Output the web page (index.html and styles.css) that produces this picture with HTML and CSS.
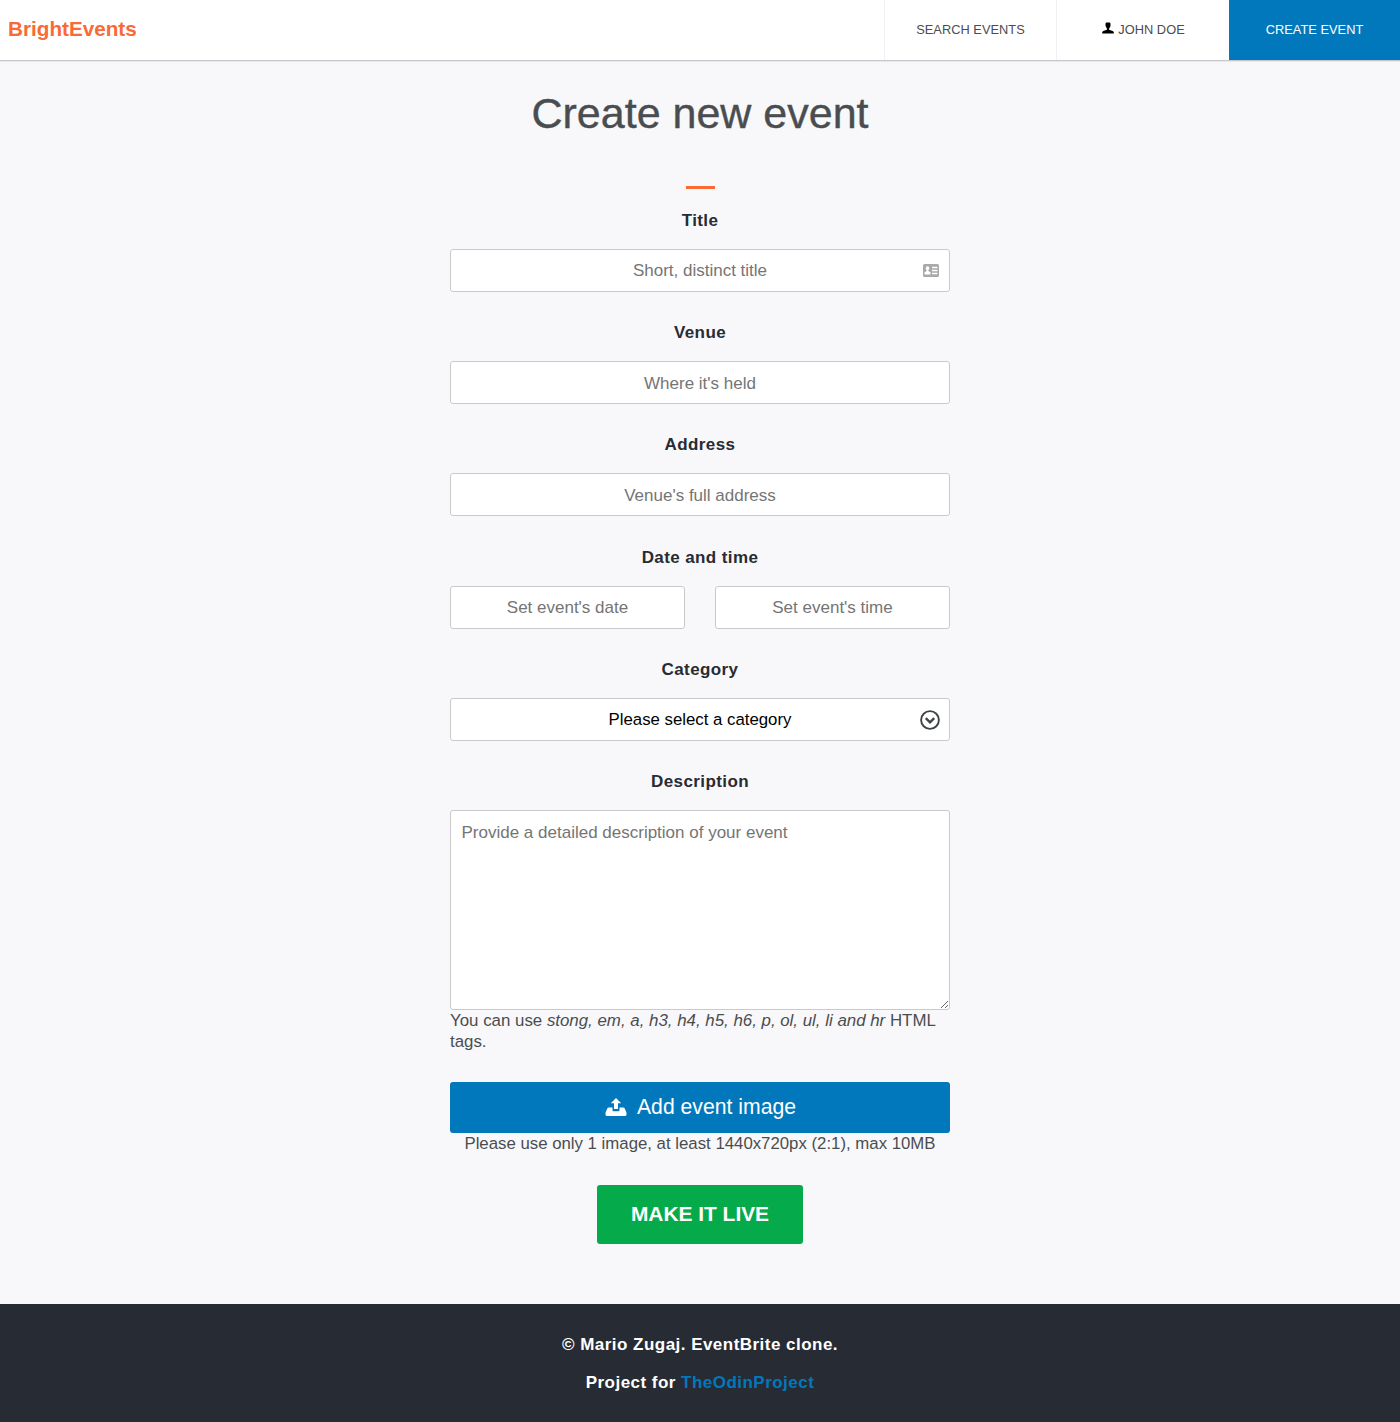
FILE: index.html
```html
<!DOCTYPE html>
<html lang="en">
<head>
  <meta charset="UTF-8">
  <meta name="viewport" content="width=device-width, initial-scale=1.0">
  <title>Create new event</title>
  <link rel="stylesheet" href="styles.css">
</head>
<body>
  <header class="topbar">
    <a class="logo" href="#">BrightEvents</a>
    <nav class="menu">
      <a class="menu-item search" href="#">SEARCH EVENTS</a>
      <a class="menu-item user" href="#">
        <svg class="user-icon" viewBox="0 0 12 12" width="12" height="12"><path d="M4.2 0.4h3.6l0.7 1.2v2.3l-0.6 1.6-0.8 1.1v1.1l3.6 1.4 1.1 0.9v1.4H0.2v-1.4l1.1-0.9 3.6-1.4V6.3L4.1 5.2 3.5 3.6V1.6z"/></svg>
        JOHN DOE
      </a>
      <a class="menu-item create" href="#">CREATE EVENT</a>
    </nav>
  </header>

  <main class="page">
    <h1>Create new event</h1>
    <div class="accent"></div>

    <form class="event-form">
      <label for="title">Title</label>
      <div class="field">
        <input type="text" id="title" placeholder="Short, distinct title">
        <svg class="card-icon" viewBox="0 0 16 13" width="16" height="13">
          <path fill-rule="evenodd" d="M1.5 0h13A1.5 1.5 0 0 1 16 1.5v10a1.5 1.5 0 0 1-1.500 1.500h-13A1.500 1.500 0 0 1 0 11.500v-10A1.500 1.500 0 0 1 1.500 0zM4.500 2.200a1.800 1.800 0 0 0-1.800 1.900c0 .9.300 1.700 1 2.200v.8l-2.200 1.100v2.300h6v-2.300l-2.200-1.100v-.8c.7-.5 1-1.300 1-2.200a1.800 1.800 0 0 0-1.800-1.900zM9 2.800v1.400h5.500V2.800zM9 5.800v1.400h5.500V5.800zM9 8.800v1.400h5.500V8.800z"/>
        </svg>
      </div>

      <label for="venue">Venue</label>
      <input type="text" id="venue" placeholder="Where it's held">

      <label for="address">Address</label>
      <input type="text" id="address" placeholder="Venue's full address">

      <label for="date">Date and time</label>
      <div class="date-row">
        <input type="text" id="date" placeholder="Set event's date">
        <input type="text" id="time" placeholder="Set event's time">
      </div>

      <label for="category">Category</label>
      <div class="field">
        <select id="category">
          <option>Please select a category</option>
        </select>
        <svg class="select-icon" viewBox="0 0 20 20" width="20" height="20">
          <circle cx="10" cy="10" r="8.900" fill="none" stroke="#3f4448" stroke-width="1.900"/>
          <path d="M5.800 8.200L10 12.400l4.200-4.200" fill="none" stroke="#3f4448" stroke-width="2.400"/>
        </svg>
      </div>

      <label for="description">Description</label>
      <textarea id="description" placeholder="Provide a detailed description of your event"></textarea>
      <p class="help">You can use <em>stong, em, a, h3, h4, h5, h6, p, ol, ul, li and hr</em> HTML tags.</p>

      <button type="button" class="upload">
        <svg viewBox="0 0 22 18" width="22" height="18">
          <path fill="#fff" d="M11 0l5.200 5.200h-3.200v5.800H9V5.200H5.800z"/>
          <path fill="#fff" d="M4 9.500h3.500v2.800c0 .6.400 1 1 1h5c.6 0 1-.4 1-1V9.500H18c1 0 1.500.6 1.800 1.200l1.700 3.800v2c0 .8-.7 1.500-1.500 1.500H2c-.8 0-1.500-.7-1.500-1.500v-2l1.700-3.800C2.500 10.100 3 9.500 4 9.500z"/>
        </svg>
        <span class="upload-text">Add event image</span>
      </button>
      <p class="help center">Please use only 1 image, at least 1440x720px (2:1), max 10MB</p>

      <button type="submit" class="live">MAKE IT LIVE</button>
    </form>
  </main>

  <footer class="footer">
    <p>© Mario Zugaj. EventBrite clone.</p>
    <p>Project for <a href="#">TheOdinProject</a></p>
  </footer>
</body>
</html>
```

FILE: styles.css
```css
* {
  box-sizing: border-box;
}

body {
  font-family: "Liberation Sans", Arial, sans-serif;
  margin: 0;
  background-color: #f8f8fa;
  color: #4a4d50;
  font-size: 17px;
}

a {
  text-decoration: none;
}

.topbar {
  display: flex;
  justify-content: space-between;
  align-items: stretch;
  height: 61px;
  background-color: white;
  border-bottom: 1px solid #c9c6cb;
  box-shadow: 0 1px 1px rgba(0, 0, 0, 0.06);
}

.logo {
  align-self: center;
  margin-left: 8px;
  margin-bottom: 2px;
  color: #f96a35;
  font-size: 20.700px;
  font-weight: bold;
}

.menu {
  display: flex;
}

.menu-item {
  display: flex;
  justify-content: center;
  align-items: center;
  gap: 4px;
  height: 60px;
  padding-bottom: 2px;
  color: #4a4d50;
  font-size: 12.800px;
  letter-spacing: 0.040px;
  border-left: 1px solid #eef0f3;
}

.search {
  width: 172px;
}

.user {
  width: 173px;
}

.user-icon {
  margin-bottom: 2px;
  margin-left: 1px;
}

.create {
  width: 171px;
  background-color: #0278bc;
  color: white;
  border-left: none;
}

.page {
  padding-bottom: 60px;
}

h1 {
  margin: 0;
  padding-top: 26px;
  height: 125px;
  text-align: center;
  font-size: 43px;
  font-weight: normal;
  line-height: 52px;
  -webkit-text-stroke: 0.400px #4a4d50;
}

.accent {
  width: 29px;
  height: 3px;
  margin: 0 auto;
  background-color: #f96a35;
}

.event-form {
  display: flex;
  flex-direction: column;
  width: 500px;
  margin: 0 auto;
}

label {
  margin-top: 1px;
  margin-bottom: 18px;
  height: 20px;
  line-height: 20px;
  text-align: center;
  font-weight: bold;
  color: #272b34;
  letter-spacing: 0.400px;
}

input, select, textarea {
  width: 100%;
  height: 43px;
  background-color: white;
  border: 1px solid #c9cacc;
  border-radius: 3px;
  font-family: inherit;
  font-size: 17px;
  color: black;
}

input {
  text-align: center;
  padding: 0 10px;
}

input::placeholder, textarea::placeholder {
  color: #757575;
  opacity: 1;
}

select {
  appearance: none;
  text-align: center;
  text-align-last: center;
  font-size: 16.800px;
}

textarea {
  display: block;
  height: 200px;
  padding: 11px 11px 11px 10.500px;
  line-height: 21px;
}

.event-form > input,
.event-form > .field,
.date-row {
  margin-bottom: 30.200px;
}

.event-form > input,
.date-row input {
  padding-top: 2px;
}

.event-form > label:first-child {
  margin-top: 22px;
  margin-bottom: 18px;
}

.field {
  position: relative;
}

.card-icon {
  position: absolute;
  top: 15px;
  right: 11px;
  fill: #a9a9a9;
}

.select-icon {
  position: absolute;
  top: 12px;
  right: 10px;
  pointer-events: none;
}

.date-row {
  display: flex;
  gap: 30px;
}

.help {
  margin: 0;
  line-height: 21px;
  font-size: 16.870px;
}

.center {
  text-align: center;
  font-size: 16.800px;
}

.upload {
  display: flex;
  justify-content: center;
  align-items: center;
  gap: 10px;
  height: 51px;
  margin-top: 30px;
  padding-top: 1px;
  background-color: #0278bc;
  color: white;
  border: none;
  border-radius: 3px;
  font-family: inherit;
  font-size: 21.200px;
  cursor: pointer;
}

.upload svg {
  margin-left: 1px;
  margin-bottom: 1px;
}

.live {
  align-self: center;
  width: 206px;
  height: 59px;
  margin-top: 31px;
  padding-bottom: 2px;
  background-color: #05ab4a;
  color: white;
  border: none;
  border-radius: 3px;
  font-family: inherit;
  font-size: 20.900px;
  font-weight: bold;
  cursor: pointer;
}

.footer {
  height: 118px;
  padding-top: 31px;
  background-color: #272b34;
  color: white;
  text-align: center;
  font-weight: bold;
  letter-spacing: 0.470px;
}

.footer p {
  margin: 0 0 18px;
  line-height: 20px;
}

.footer a {
  color: #0278bc;
}
```
